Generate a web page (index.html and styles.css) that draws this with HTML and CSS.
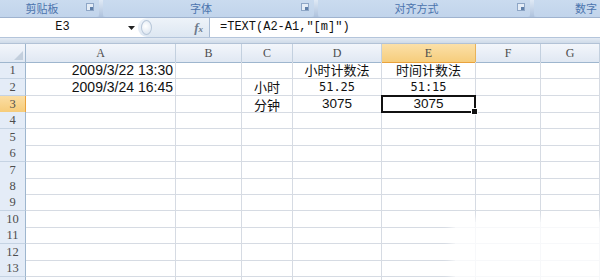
FILE: index.html
```html
<!DOCTYPE html>
<html lang="zh">
<head>
<meta charset="utf-8">
<title>Excel</title>
<link rel="stylesheet" href="styles.css">
</head>
<body>
<div class="app">
  <div class="ribbon">
    <div class="grp g1"><span class="glabel">剪贴板</span><span class="launch"></span></div>
    <div class="gsep"></div>
    <div class="grp g2"><span class="glabel">字体</span><span class="launch"></span></div>
    <div class="gsep"></div>
    <div class="grp g3"><span class="glabel">对齐方式</span><span class="launch"></span></div>
    <div class="gsep"></div>
    <div class="grp g4"><span class="glabel">数字</span></div>
  </div>
  <div class="fbar">
    <div class="namebox">E3</div>
    <div class="nbarrow"><svg width="7" height="4" viewBox="0 0 7 4"><path d="M0 0H7L3.5 4Z" fill="#222"/></svg></div>
    <div class="fmid">
      <span class="knob"></span>
      <span class="fx">f<i>x</i></span>
    </div>
    <div class="finput">=TEXT(A2-A1,"[m]")</div>
  </div>
  <div class="gap"></div>
  <div class="sheet">
    <div class="row hdr">
      <div class="corner"></div>
      <div class="ch">A</div><div class="ch">B</div><div class="ch">C</div><div class="ch">D</div><div class="ch sel">E</div><div class="ch">F</div><div class="ch">G</div>
    </div>
    <div class="row r17">
      <div class="rh">1</div>
      <div class="c num">2009/3/22 13:30</div><div class="c"></div><div class="c"></div><div class="c cjk">小时计数法</div><div class="c cjk">时间计数法</div><div class="c"></div><div class="c"></div>
    </div>
    <div class="row r17">
      <div class="rh">2</div>
      <div class="c num">2009/3/24 16:45</div><div class="c"></div><div class="c cjk">小时</div><div class="c mono">51.25</div><div class="c mono">51:15</div><div class="c"></div><div class="c"></div>
    </div>
    <div class="row r16">
      <div class="rh rsel">3</div>
      <div class="c"></div><div class="c"></div><div class="c cjk lo">分钟</div><div class="c num ctr">3075</div><div class="c num ctr active">3075<span class="handle"></span></div><div class="c"></div><div class="c"></div>
    </div>
    <div class="row r17"><div class="rh">4</div><div class="c"></div><div class="c"></div><div class="c"></div><div class="c"></div><div class="c"></div><div class="c"></div><div class="c"></div></div>
    <div class="row r16"><div class="rh">5</div><div class="c"></div><div class="c"></div><div class="c"></div><div class="c"></div><div class="c"></div><div class="c"></div><div class="c"></div></div>
    <div class="row r17"><div class="rh">6</div><div class="c"></div><div class="c"></div><div class="c"></div><div class="c"></div><div class="c"></div><div class="c"></div><div class="c"></div></div>
    <div class="row r16"><div class="rh">7</div><div class="c"></div><div class="c"></div><div class="c"></div><div class="c"></div><div class="c"></div><div class="c"></div><div class="c"></div></div>
    <div class="row r16"><div class="rh">8</div><div class="c"></div><div class="c"></div><div class="c"></div><div class="c"></div><div class="c"></div><div class="c"></div><div class="c"></div></div>
    <div class="row r17"><div class="rh">9</div><div class="c"></div><div class="c"></div><div class="c"></div><div class="c"></div><div class="c"></div><div class="c"></div><div class="c"></div></div>
    <div class="row r16"><div class="rh">10</div><div class="c"></div><div class="c"></div><div class="c"></div><div class="c"></div><div class="c"></div><div class="c"></div><div class="c"></div></div>
    <div class="row r17"><div class="rh">11</div><div class="c"></div><div class="c"></div><div class="c"></div><div class="c"></div><div class="c"></div><div class="c"></div><div class="c"></div></div>
    <div class="row r16"><div class="rh">12</div><div class="c"></div><div class="c"></div><div class="c"></div><div class="c"></div><div class="c"></div><div class="c"></div><div class="c"></div></div>
    <div class="row r17"><div class="rh">13</div><div class="c"></div><div class="c"></div><div class="c"></div><div class="c"></div><div class="c"></div><div class="c"></div><div class="c"></div></div>
    <div class="row r17"><div class="rh"></div><div class="c"></div><div class="c"></div><div class="c"></div><div class="c"></div><div class="c"></div><div class="c"></div><div class="c"></div></div>
  </div>
  <div class="wmark"></div>
</div>
</body>
</html>
```
FILE: styles.css
```css
html, body {
  margin: 0;
  padding: 0;
  background: #ffffff;
}
body {
  width: 600px;
  height: 280px;
  overflow: hidden;
}
.app {
  position: relative;
  width: 600px;
  height: 280px;
  display: flex;
  flex-direction: column;
  overflow: hidden;
}

/* ribbon group labels */
.ribbon {
  display: flex;
  height: 17px;
  flex: none;
  background: #b7cae3;
}
.grp {
  position: relative;
  display: flex;
  align-items: center;
  height: 17px;
  background: linear-gradient(#cadbef, #c1d4eb);
  box-sizing: border-box;
}
.g1 { width: 99px; padding-right: 15px; border-radius: 0 0 3px 0; }
.g2 { width: 211px; padding-right: 15px; border-radius: 0 0 3px 3px; }
.g3 { width: 212px; padding-right: 15px; border-radius: 0 0 3px 3px; }
.g4 { flex: 1; padding-left: 41px; border-radius: 0 0 0 3px; }
.gsep {
  width: 4px;
  height: 17px;
  background: linear-gradient(#dfe9f5, #aec2dd);
}
.glabel {
  flex: 1;
  text-align: center;
  font-family: "Noto Sans CJK SC", sans-serif;
  font-size: 11px;
  line-height: 17px;
  color: #4b74ad;
}
.g4 .glabel { flex: none; }
.launch {
  position: absolute;
  right: 5px;
  top: 3px;
  width: 6px;
  height: 6px;
  border: 1px solid #8ea6c6;
  background: #e4ecf6;
}
.launch::after {
  content: "";
  position: absolute;
  right: 0;
  bottom: 0;
  width: 3px;
  height: 3px;
  background: #5f7fa8;
}

/* formula bar */
.fbar {
  display: flex;
  height: 21px;
  flex: none;
  border-top: 1px solid #9fb3cf;
  border-bottom: 1px solid #b4c5db;
  box-sizing: border-box;
  background: #ffffff;
}
.namebox {
  width: 125px;
  text-align: center;
  font-family: "Liberation Mono", "Courier New", monospace;
  font-size: 12px;
  line-height: 19px;
  color: #111;
}
.nbarrow {
  width: 13px;
  display: flex;
  align-items: center;
  justify-content: center;
}
.fmid {
  width: 72px;
  display: flex;
  align-items: center;
  justify-content: space-between;
  background: linear-gradient(#eef3f9, #dde7f2);
  border-radius: 9px 0 0 9px;
  padding: 0 6px 0 3px;
  box-sizing: border-box;
  border-right: 1px solid #a9bcd4;
}
.knob {
  width: 11px;
  height: 15px;
  border-radius: 50%;
  border: 1px solid #b8c7d9;
  background: radial-gradient(circle at 40% 40%, #ffffff, #d6e1ee);
  box-sizing: border-box;
}
.fx {
  font-family: "Liberation Serif", serif;
  font-style: italic;
  font-weight: bold;
  font-size: 13px;
  color: #6d7a8c;
}
.fx i { font-size: 9px; }
.finput {
  flex: 1;
  padding-left: 10px;
  font-family: "Liberation Mono", "Courier New", monospace;
  font-size: 12px;
  line-height: 19px;
  color: #111;
}
.gap {
  height: 5px;
  flex: none;
  background: linear-gradient(#e3eaf3, #cfdbe9);
  border-bottom: 1px solid #b2c2d6;
}

/* sheet */
.sheet {
  display: flex;
  flex-direction: column;
}
.row {
  display: grid;
  grid-template-columns: 26px 150px 66px 51px 89px 94px 65px 59px;
  flex: none;
}
.r17 { height: 17px; }
.r16 { height: 16px; }
.hdr { height: 18px; }

.corner, .ch {
  box-sizing: border-box;
  background: linear-gradient(#f3f6fb, #e0e8f3);
  border-bottom: 1px solid #9eb6ce;
  border-right: 1px solid #c3d0df;
}
.corner {
  position: relative;
  border-right: 1px solid #9eb6ce;
}
.corner::after {
  content: "";
  position: absolute;
  right: 2px;
  bottom: 2px;
  width: 0;
  height: 0;
  border-left: 9px solid transparent;
  border-bottom: 9px solid #c3cfdd;
}
.ch {
  text-align: center;
  font-family: "Liberation Serif", serif;
  font-size: 12px;
  line-height: 18px;
  color: #4d4d4d;
}
.ch.sel {
  background: linear-gradient(#fbe0a8, #f6cd7c);
  border-right-color: #e8b35a;
  border-bottom-color: #e9a23c;
}
.rh {
  box-sizing: border-box;
  background: #e4ecf7;
  border-right: 1px solid #9eb6ce;
  border-bottom: 1px solid #c5d3e3;
  text-align: center;
  font-family: "Liberation Serif", serif;
  font-size: 12.5px;
  line-height: 16px;
  color: #4d4d4d;
}
.rh.rsel {
  background: linear-gradient(#fbdea4, #f6cc7a);
  border-bottom-color: #e9a23c;
  border-right-color: #e9a23c;
}
.c {
  box-sizing: border-box;
  border-right: 1px solid #d6dbe3;
  border-bottom: 1px solid #d6dbe3;
  white-space: nowrap;
  color: #111;
  padding: 0 2px;
}
.num {
  text-align: right;
  font-family: "Liberation Sans", Arial, sans-serif;
  font-size: 14px;
  line-height: 16px;
}
.ctr { text-align: center; font-size: 13.5px; line-height: 15px; }
.cjk {
  text-align: center;
  font-family: "Noto Sans CJK SC", sans-serif;
  font-size: 13px;
  line-height: 16px;
}
.cjk.lo { padding-top: 2px; line-height: 13px; }
.mono {
  text-align: center;
  font-family: "DejaVu Sans Mono", monospace;
  font-size: 12px;
  line-height: 16px;
}
.active {
  position: relative;
}
.active::before {
  content: "";
  position: absolute;
  left: -1px;
  top: -1px;
  right: -1px;
  bottom: -1px;
  border: 2px solid #111;
}
.handle {
  position: absolute;
  right: -3px;
  bottom: -3px;
  width: 5px;
  height: 5px;
  background: #111;
  border: 1px solid #fff;
}

/* faint watermark patch */
.wmark {
  position: absolute;
  left: 455px;
  top: 222px;
  width: 160px;
  height: 70px;
  background: rgba(255, 255, 255, 0.8);
  box-shadow: 0 0 8px 4px rgba(255, 255, 255, 0.8);
}
```
